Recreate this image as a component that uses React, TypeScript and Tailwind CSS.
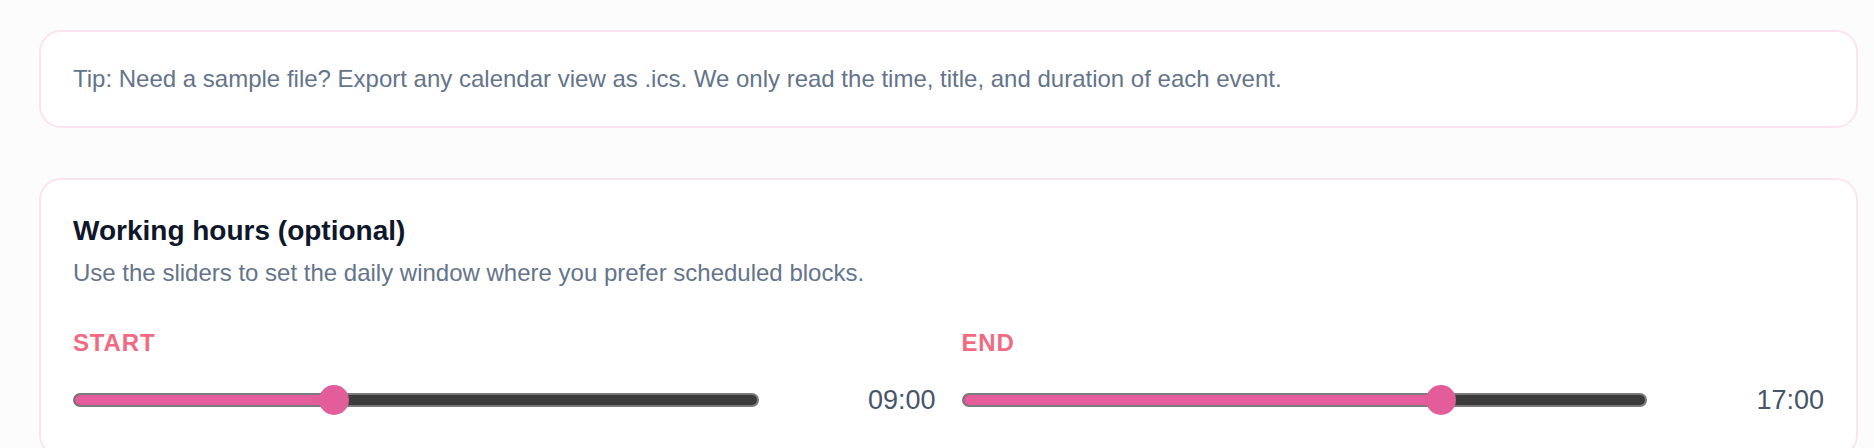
import React from 'react';

const HOURS = 24;

function TimeSlider({ label, value }: { label: string; value: number }) {
  const pct = value / HOURS;
  const text = `${String(value).padStart(2, '0')}:00`;
  return (
    <div className="flex flex-col">
      <span className="text-[24px] leading-[34px] font-bold uppercase tracking-[0.035em] text-[#f26a82]">
        {label}
      </span>
      <div className="mt-[25px] flex items-center gap-[27px]">
        <div className="relative flex-1 h-[30px] flex items-center">
          <div className="h-[14px] w-full rounded-full border-2 border-[#7b7b7b] bg-[#3b3b3b] overflow-hidden">
            <div
              className="h-full bg-[#e35d9b]"
              style={{ width: `calc(${pct} * (100% - 30px) + 13px)` }}
            />
          </div>
          <div
            className="absolute top-0 h-[30px] w-[30px] rounded-full bg-[#e35d9b]"
            style={{ left: `calc(${pct} * (100% - 30px))` }}
          />
        </div>
        <span className="w-[150px] text-right text-[27px] leading-[30px] text-[#475569]">
          {text}
        </span>
      </div>
    </div>
  );
}

export default function App() {
  return (
    <div
      className="min-h-screen bg-[#fcfcfd] pl-[39px] pr-[16px] pt-[30px]"
      style={{ fontFamily: '"Liberation Sans", Arial, sans-serif' }}
    >
      {/* Tip */}
      <div className="rounded-[22px] border-2 border-[#fbe4f0] bg-white px-[32px] py-[29px]">
        <p className="text-[24px] leading-[36px] text-[#64748b]">
          Tip: Need a sample file? Export any calendar view as .ics. We only read the time, title, and duration of each event.
        </p>
      </div>

      {/* Working hours */}
      <div className="mt-[50px] rounded-[22px] border-2 border-[#fbe4f0] bg-white px-[32px] pt-[33px] pb-[40px]">
        <h2 className="text-[28px] leading-[35px] font-bold text-[#0f172a]">Working hours (optional)</h2>
        <p className="mt-[7px] text-[24px] leading-[36px] text-[#64748b]">
          Use the sliders to set the daily window where you prefer scheduled blocks.
        </p>
        <div className="mt-[35px] grid grid-cols-2 gap-x-[26px]">
          <TimeSlider label="Start" value={9} />
          <TimeSlider label="End" value={17} />
        </div>
      </div>
    </div>
  );
}
